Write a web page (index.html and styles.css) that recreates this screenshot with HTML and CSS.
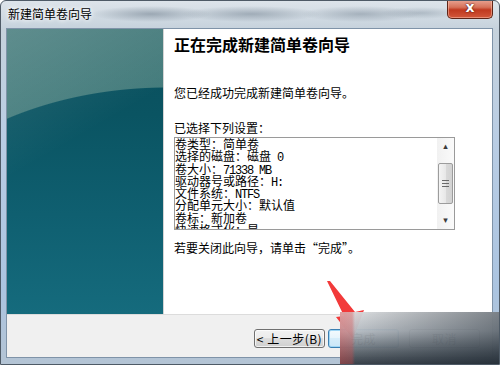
FILE: index.html
```html
<!DOCTYPE html>
<html lang="zh-CN">
<head>
    <meta charset="UTF-8">
    <title>新建简单卷向导</title>
    <link rel="stylesheet" href="styles.css">
</head>
<body>
    <div class="window">
        <div class="titlebar">
            <span class="title">新建简单卷向导</span>
            <div class="close">x</div>
        </div>
        <div class="client">
            <div class="page">
                <div class="side"></div>
                <div class="content">
                    <h1>正在完成新建简单卷向导</h1>
                    <p class="lead">您已经成功完成新建简单卷向导。</p>
                    <p class="label">已选择下列设置：</p>
                    <div class="listbox">
                        <div class="lines">
                            <div>卷类型：简单卷</div>
                            <div>选择的磁盘：磁盘<span class="en"> 0</span></div>
                            <div>卷大小：<span class="en">71338 MB</span></div>
                            <div>驱动器号或路径：<span class="en">H:</span></div>
                            <div>文件系统：<span class="en">NTFS</span></div>
                            <div>分配单元大小：默认值</div>
                            <div>卷标：新加卷</div>
                            <div>快速格式化：是</div>
                        </div>
                        <div class="scrollbar">
                            <div class="sb-btn">&#9652;</div>
                            <div class="sb-thumb"><span></span><span></span><span></span></div>
                            <div class="sb-btn">&#9662;</div>
                        </div>
                    </div>
                    <p class="hint">若要关闭此向导，请单击“完成”。</p>
                </div>
            </div>
            <div class="footer">
                <button class="btn">&lt;&nbsp;上一步(<u>B</u>)</button>
                <button class="btn default">完成</button>
                <button class="btn cancel">取消</button>
            </div>
        </div>
        <svg class="arrow" width="50" height="70" viewBox="0 0 50 70">
            <polygon points="5,4 8,4 33,35 42,33 31,62 14,40 22,39" fill="#f23a3a"/>
        </svg>
        <div class="watermark"></div>
    </div>
</body>
</html>
```

FILE: styles.css
```css
* {
    box-sizing: border-box;
}
body {
    margin: 0;
    background: #fff;
    color: #000;
    font-family: "Noto Sans CJK SC", sans-serif;
    font-size: 12px;
}
.window {
    position: relative;
    width: 500px;
    height: 365px;
    display: flex;
    flex-direction: column;
    padding: 0 7px 7px 6px;
    border: 1px solid #4e5a66;
    border-radius: 6px 6px 0 0;
    overflow: hidden;
    background:
        radial-gradient(60px 8px at 150px 13px, rgba(110, 125, 140, 0.55), transparent),
        radial-gradient(70px 8px at 250px 13px, rgba(110, 125, 140, 0.5), transparent),
        radial-gradient(60px 8px at 360px 13px, rgba(110, 125, 140, 0.45), transparent),
        radial-gradient(40px 6px at 420px 12px, rgba(120, 135, 150, 0.4), transparent),
        linear-gradient(to bottom, #dde4ea 0, #c6d2dc 28px, #b9cde4 140px, #abc4e0 290px, #b4c4d4 365px);
}
.titlebar {
    height: 28px;
    display: flex;
    justify-content: space-between;
    align-items: center;
    padding: 0 0 2px 1px;
}
.title {
    font-size: 12px;
    line-height: 14px;
    text-shadow: 0 0 4px #fff, 0 0 6px #fff;
}
.close {
    align-self: flex-start;
    width: 46px;
    height: 19px;
    margin: -1px -1px 0 0;
    border: 1px solid #5e2417;
    border-top: none;
    border-radius: 0 0 5px 5px;
    background: linear-gradient(to bottom, #e9a493 0, #d6725a 40%, #c0391f 55%, #d2573a 100%);
    box-shadow: inset 0 0 0 1px rgba(255, 200, 180, 0.5);
    color: #fff;
    font-family: "DejaVu Sans", sans-serif;
    font-weight: bold;
    font-size: 14px;
    line-height: 15px;
    text-align: center;
    text-shadow: 0 0 2px #5a1a10, 0 0 1px #5a1a10;
}
.client {
    flex: 1;
    display: flex;
    flex-direction: column;
    background: #f0f0f0;
    box-shadow: 0 0 0 1px #7f93a8;
}
.page {
    height: 286px;
    display: flex;
    background: #fff;
    border-bottom: 1px solid #dcdcdc;
}
.side {
    width: 156px;
    background:
        linear-gradient(150deg, rgba(255, 255, 255, 0.14), transparent 40%),
        radial-gradient(300px 202px at 160px 260px, transparent 99.5%, rgba(105, 150, 142, 0.62) 100%),
        linear-gradient(to bottom, #094e5c 0, #0a5462 30%, #0f5f70 65%, #156b7d 100%);
}
.content {
    flex: 1;
    padding: 5px 10px 0 10px;
    border-left: 1px solid #d4d4d4;
}
h1 {
    margin: 0;
    font-size: 16px;
    line-height: 20px;
    font-weight: bold;
}
p {
    margin: 0;
    line-height: 16px;
}
.lead {
    margin-top: 31px;
}
.label {
    margin-top: 19px;
}
.hint {
    margin-top: 10px;
}
.listbox {
    width: 281px;
    height: 93px;
    margin-top: 1px;
    display: flex;
    border: 1px solid #9a9a9a;
    background: #fff;
}
.lines {
    flex: 1;
    overflow: hidden;
    white-space: nowrap;
}
.lines div {
    height: 12.3px;
    line-height: 12.3px;
}
.en {
    font-family: "Liberation Mono", monospace;
    font-size: 12px;
    line-height: 10px;
    letter-spacing: -1.2px;
}
.scrollbar {
    width: 17px;
    display: flex;
    flex-direction: column;
    justify-content: space-between;
    background: linear-gradient(to right, #f1f1f1, #fafafa);
}
.sb-btn {
    height: 17px;
    color: #3a3a3a;
    font-family: "DejaVu Sans", sans-serif;
    font-size: 9px;
    line-height: 17px;
    text-align: center;
}
.sb-thumb {
    height: 41px;
    margin: 0 1px;
    display: flex;
    flex-direction: column;
    justify-content: center;
    align-items: center;
    gap: 2px;
    border: 1px solid #9c9c9c;
    border-radius: 2px;
    background: linear-gradient(to right, #f4f4f4, #e8e8e8 50%, #d9d9d9 50%, #d2d2d2);
}
.sb-thumb span {
    width: 7px;
    height: 1px;
    background: #6a6a6a;
}
.footer {
    flex: 1;
    display: flex;
    justify-content: flex-end;
    align-items: flex-start;
    padding: 14px 12px 0 0;
}
.btn {
    width: 71px;
    height: 19px;
    padding: 0;
    border: 1px solid #707070;
    border-radius: 3px;
    background: linear-gradient(to bottom, #f2f2f2 0, #ebebeb 50%, #dddddd 50%, #cfcfcf 100%);
    box-shadow: inset 0 0 0 1px rgba(255, 255, 255, 0.7);
    font-family: "Noto Sans CJK SC", sans-serif;
    font-size: 12px;
    line-height: 15px;
    color: #000;
    letter-spacing: 0.5px;
}
.btn u {
    text-decoration: none;
}
.default {
    margin-left: 3px;
    border-color: #3c7fb1;
    background: linear-gradient(to bottom, #f4fafd 0, #e6f4fc 50%, #d6edfa 50%, #cbe7f8 100%);
    box-shadow: inset 0 0 0 1px #9fd6f5;
}
.cancel {
    margin-left: 10px;
}
.arrow {
    position: absolute;
    left: 321px;
    top: 276px;
}
.watermark {
    position: absolute;
    left: 339px;
    top: 311px;
    width: 161px;
    height: 54px;
    background:
        linear-gradient(to right, rgba(215, 70, 70, 0.45) 0, rgba(215, 70, 70, 0.35) 12px, transparent 15px),
        linear-gradient(to right, rgba(255, 255, 255, 0) 0, rgba(20, 30, 40, 0.5) 100%),
        linear-gradient(to bottom, rgba(228, 230, 232, 0.95) 0, rgba(190, 196, 202, 0.95) 35%, rgba(95, 104, 112, 0.97) 75%, #343c44 100%);
}
```
